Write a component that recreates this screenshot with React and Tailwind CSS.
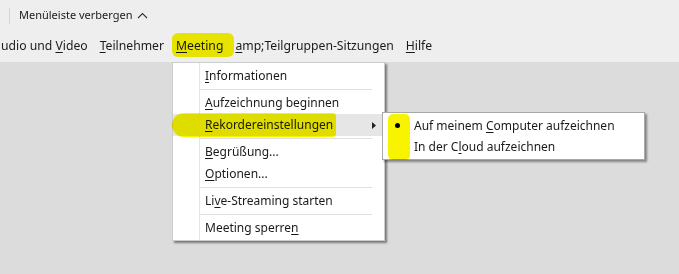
import React from "react";

const U = ({ children }) => <span className="underline underline-offset-2 decoration-1">{children}</span>;

function Item({ children }) {
  return (
    <div className="h-[22px] flex items-center pl-[32px]">
      <span className="whitespace-nowrap">{children}</span>
    </div>
  );
}

function Sep() {
  return <div className="h-[5px] flex items-center pl-[27px] pr-[12px]"><div className="h-px w-full bg-[#e0e0e0]" /></div>;
}

export default function App() {
  return (
    <div className="relative w-[679px] h-[274px] bg-[#dcdcdc] overflow-hidden text-[#1a1a1a] font-['Noto_Sans',sans-serif] text-[12px]">
      <div className="h-[31px] bg-[#eeeeee] flex items-center">
        <div className="ml-[9px] w-px h-[16px] bg-[#d6d6d6]" />
        <span className="ml-[9px] text-[11px]">Menüleiste verbergen</span>
        <svg width="11" height="7" viewBox="0 0 11 7" className="ml-[5px]"><path d="M1 6 L5.5 1.5 L10 6" fill="none" stroke="#333" strokeWidth="1.1" /></svg>
      </div>
      <div className="h-[31px] bg-[#eeeeee] flex items-center text-[12.2px] gap-[12px]">
        <span className="ml-[1px]">udio und <U>V</U>ideo</span>
        <span><U>T</U>eilnehmer</span>
        <span><U>M</U>eeting</span>
        <span><U>a</U>mp;Teilgruppen-Sitzungen</span>
        <span><U>H</U>ilfe</span>
      </div>

      {/* highlighter marks */}
      <div className="absolute left-[172px] top-[33px] w-[62px] h-[24px] bg-[#f8f400] rounded-[6px] mix-blend-multiply blur-[0.5px]" />
      <div className="absolute left-[172px] top-[113px] w-[164px] h-[24px] bg-[#f8f400] rounded-l-[14px] rounded-r-[4px] mix-blend-multiply blur-[0.5px] z-20" />

      {/* dropdown */}
      <div className="absolute left-[172px] top-[62px] w-[213px] bg-white border border-[#cccccc] shadow-[2px_2px_2px_rgba(0,0,0,0.45)] pt-[2px] pb-[1px] z-10">
        <div className="absolute left-[26px] top-0 bottom-0 w-px bg-[#e6e6e6]" />
        <Item><U>I</U>nformationen</Item>
        <Sep />
        <Item><U>A</U>ufzeichnung beginnen</Item>
        <div className="h-[22px] flex items-center pl-[32px] bg-[#e6e6e6] relative">
          <span className="relative z-30"><U>R</U>ekordereinstellungen</span>
          <svg width="4" height="7" viewBox="0 0 4 7" className="absolute right-[8px] top-[8px]"><path d="M0 0 L4 3.5 L0 7 Z" fill="#222" /></svg>
        </div>
        <Sep />
        <Item><U>B</U>egrüßung...</Item>
        <Item><U>O</U>ptionen...</Item>
        <Sep />
        <Item>Li<U>v</U>e-Streaming starten</Item>
        <Sep />
        <Item>Meeting sperre<U>n</U></Item>
      </div>

      {/* submenu */}
      <div className="absolute left-[382px] top-[112px] w-[263px] h-[48px] bg-white border border-[#a8a8a8] shadow-[2px_2px_2px_rgba(0,0,0,0.4)] py-[2px] z-30">
        <div className="absolute left-[5px] top-[1px] w-[22px] h-[46px] bg-[#f8f400] rounded-[5px] mix-blend-multiply" />
        <div className="h-[21px] flex items-center pl-[31px] relative">
          <div className="absolute left-[12px] top-[8px] w-[5px] h-[5px] rounded-full bg-black" />
          <span className="whitespace-nowrap">Auf meinem <U>C</U>omputer aufzeichnen</span>
        </div>
        <div className="h-[21px] flex items-center pl-[31px]">
          <span className="whitespace-nowrap">In der C<U>l</U>oud aufzeichnen</span>
        </div>
      </div>
    </div>
  );
}
